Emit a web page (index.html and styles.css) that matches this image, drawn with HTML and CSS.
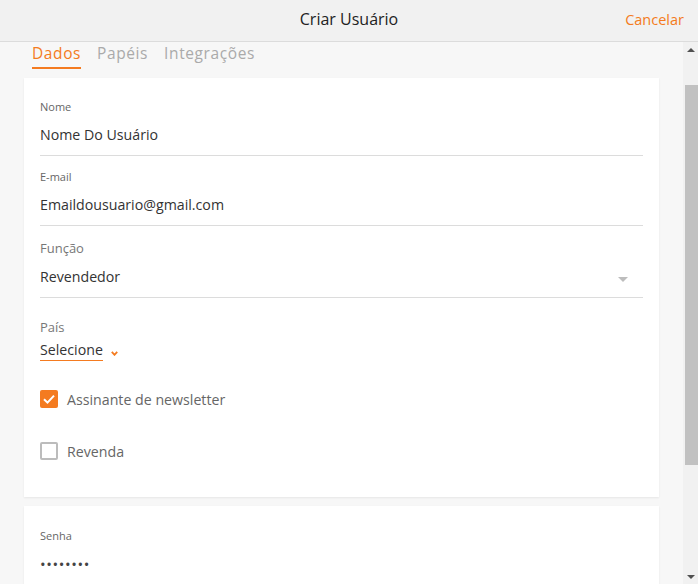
FILE: index.html
```html
<!DOCTYPE html>
<html lang="pt-BR">
<head>
  <meta charset="UTF-8">
  <meta name="viewport" content="width=device-width, initial-scale=1">
  <title>Criar Usuário</title>
  <link rel="stylesheet" href="styles.css">
</head>
<body>

<div class="modal">
  <div class="header">
    <span></span>
    <h1 class="title">Criar Usuário</h1>
    <a class="cancel" href="#">Cancelar</a>
  </div>

  <div class="body">
    <div class="content">
      <div class="tabs">
        <a class="tab active" href="#">Dados</a>
        <a class="tab" href="#">Papéis</a>
        <a class="tab" href="#">Integrações</a>
      </div>

      <div class="card">
        <div class="field">
          <label class="label">Nome</label>
          <div class="value">Nome Do Usuário</div>
        </div>
        <div class="field">
          <label class="label">E-mail</label>
          <div class="value">Emaildousuario@gmail.com</div>
        </div>
        <div class="field select">
          <label class="label big">Função</label>
          <div class="value">
            <span>Revendedor</span>
            <span class="caret"></span>
          </div>
        </div>

        <div class="country">
          <label class="label big">País</label>
          <div class="country-select">
            <span class="country-value">Selecione</span>
            <svg class="chevron" width="7" height="5" viewBox="0 0 7 5">
              <path d="M0.8 0.8 L3.5 3.8 L6.2 0.8" fill="none" stroke="#f47b20" stroke-width="1.8"/>
            </svg>
          </div>
        </div>

        <div class="check-row">
          <span class="checkbox checked">
            <svg width="18" height="18" viewBox="0 0 18 18">
              <path d="M4 9.2 L7.5 12.6 L14 5.6" fill="none" stroke="#fff" stroke-width="2"/>
            </svg>
          </span>
          <span class="check-label">Assinante de newsletter</span>
        </div>
        <div class="check-row">
          <span class="checkbox"></span>
          <span class="check-label">Revenda</span>
        </div>
      </div>

      <div class="card second">
        <div class="field">
          <label class="label">Senha</label>
          <div class="value dots">••••••••</div>
        </div>
      </div>
    </div>

    <div class="scrollbar">
      <span class="arrow up"></span>
      <div class="thumb"></div>
      <span class="arrow down"></span>
    </div>
  </div>
</div>

</body>
</html>
```

FILE: styles.css
```css
* {
  box-sizing: border-box;
}

body {
  margin: 0;
  font-family: "Open Sans", "Noto Sans", sans-serif;
  background-color: #f7f7f7;
  color: #333;
}

a {
  text-decoration: none;
}

.modal {
  width: 698px;
  height: 584px;
  overflow: hidden;
}

.header {
  height: 42px;
  background-color: #f1f1f1;
  border-bottom: 1px solid #dcdcdc;
  display: grid;
  grid-template-columns: 1fr auto 1fr;
  align-items: center;
}

.title {
  margin: 0;
  font-size: 16px;
  font-weight: 400;
  color: #222;
  padding-bottom: 3px;
}

.cancel {
  justify-self: end;
  padding-right: 14px;
  padding-bottom: 3px;
  color: #f47b20;
  font-size: 14.5px;
}

.body {
  display: flex;
  height: 542px;
}

.content {
  flex: 1;
  padding: 0 24px;
  overflow: hidden;
}

.tabs {
  display: flex;
  gap: 16px;
  padding: 1px 0 0 8px;
  margin-bottom: 9px;
}

.tab {
  font-size: 15.5px;
  line-height: 20px;
  letter-spacing: 0.6px;
  color: #aaa;
  padding-bottom: 4px;
  border-bottom: 2px solid transparent;
}

.tab.active {
  color: #f47b20;
  border-bottom-color: #f47b20;
}

.card {
  background: #fff;
  box-shadow: 0 1px 2px rgba(0, 0, 0, 0.07);
  padding: 21px 16px 37px;
}

.card.second {
  margin-top: 9px;
  padding-top: 22px;
  padding-bottom: 20px;
}

.field {
  border-bottom: 1px solid #dcdcdc;
  padding-bottom: 10px;
  margin-bottom: 13px;
}

.label {
  display: block;
  font-size: 11px;
  line-height: 16px;
  color: #666;
  margin-bottom: 10px;
}

.label.big {
  font-size: 13px;
  line-height: 18px;
  color: #777;
}

.value {
  font-size: 14.2px;
  line-height: 20px;
  color: #333;
}

.select .value {
  display: flex;
  justify-content: space-between;
  align-items: center;
}

.caret {
  width: 0;
  height: 0;
  margin: 4px 15px 0 0;
  border-left: 5px solid transparent;
  border-right: 5px solid transparent;
  border-top: 5px solid #bdbdbd;
}

.value.dots {
  font-size: 15px;
  letter-spacing: 0.6px;
  color: #444;
}

.country {
  padding-top: 7px;
}

.country .label {
  margin-bottom: 4px;
}

.country-select {
  display: flex;
  align-items: center;
  gap: 8px;
}

.country-value {
  font-size: 14.2px;
  line-height: 20px;
  color: #333;
  border-bottom: 1px solid #f47b20;
}

.chevron {
  margin-top: 5px;
}

.check-row {
  display: flex;
  align-items: center;
  gap: 9px;
  margin-top: 29px;
  height: 18px;
}

.check-row + .check-row {
  margin-top: 34px;
}

.checkbox {
  width: 18px;
  height: 18px;
  border: 2px solid #bcbcbc;
  border-radius: 2px;
  display: flex;
}

.checkbox.checked {
  border: none;
  background-color: #f47b20;
}

.check-label {
  font-size: 14.2px;
  color: #666;
}

.scrollbar {
  width: 15px;
  background-color: #f1f1f1;
  display: flex;
  flex-direction: column;
  align-items: flex-end;
}

.thumb {
  width: 13px;
  height: 380px;
  background-color: #c1c1c1;
  margin-top: 33px;
}

.arrow {
  width: 0;
  height: 0;
  border-left: 4px solid transparent;
  border-right: 4px solid transparent;
  margin-right: 3px;
}

.arrow.up {
  margin-top: 6px;
  border-bottom: 4px solid #505050;
}

.arrow.down {
  margin-top: auto;
  margin-bottom: 5px;
  border-top: 4px solid #505050;
}
```
